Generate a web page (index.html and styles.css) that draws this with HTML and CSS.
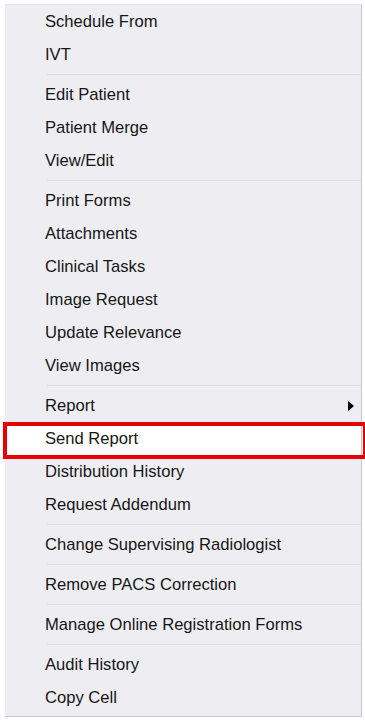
FILE: index.html
```html
<!DOCTYPE html>
<html lang="en">
<head>
    <meta charset="UTF-8">
    <meta name="viewport" content="width=device-width, initial-scale=1.0">
    <title>Context Menu</title>
    <link rel="stylesheet" href="styles.css">
</head>
<body>

    <ul class="menu">
        <li class="item">Schedule From</li>
        <li class="item">IVT</li>
        <li class="sep"></li>
        <li class="item">Edit Patient</li>
        <li class="item">Patient Merge</li>
        <li class="item">View/Edit</li>
        <li class="sep"></li>
        <li class="item">Print Forms</li>
        <li class="item">Attachments</li>
        <li class="item">Clinical Tasks</li>
        <li class="item">Image Request</li>
        <li class="item">Update Relevance</li>
        <li class="item">View Images</li>
        <li class="sep"></li>
        <li class="item has-sub">Report</li>
        <li class="item highlight">Send Report</li>
        <li class="item">Distribution History</li>
        <li class="item">Request Addendum</li>
        <li class="sep"></li>
        <li class="item">Change Supervising Radiologist</li>
        <li class="sep"></li>
        <li class="item">Remove PACS Correction</li>
        <li class="sep"></li>
        <li class="item">Manage Online Registration Forms</li>
        <li class="sep"></li>
        <li class="item">Audit History</li>
        <li class="item">Copy Cell</li>
    </ul>

</body>
</html>
```

FILE: styles.css
```css
body {
    font-family: "Liberation Sans", Arial, sans-serif;
    margin: 0;
    padding: 4px 0 0 5px;
    background: #ffffff;
}
.menu {
    list-style: none;
    margin: 0;
    padding: 0 0 2px;
    width: 356px;
    background-color: #eeeef2;
    border-top: 1px solid #e2e2e8;
    border-right: 1px solid #c8c8d0;
    border-bottom: 1px solid #c8c8d0;
}
.item {
    position: relative;
    height: 33px;
    line-height: 33px;
    padding-left: 40px;
    font-size: 16.6px;
    color: #161616;
}
.sep {
    height: 7px;
    display: flex;
    align-items: center;
    padding-left: 42px;
}
.sep::before {
    content: "";
    flex: 1;
    height: 1px;
    background-color: #dcdce4;
}
.has-sub::after {
    content: "";
    position: absolute;
    right: 7px;
    top: 12px;
    border-left: 6px solid #000;
    border-top: 5px solid transparent;
    border-bottom: 5px solid transparent;
}
.highlight {
    background-color: #ffffff;
}
.highlight::before {
    content: "";
    position: absolute;
    top: 0;
    left: -2px;
    right: -6px;
    bottom: -4px;
    border: 4px solid #e60000;
}
```
